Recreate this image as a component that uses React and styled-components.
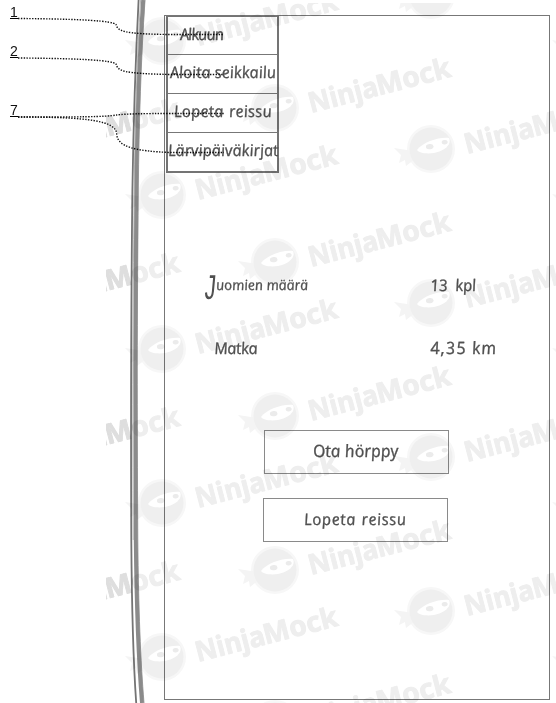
import React from "react";
import styled, { createGlobalStyle } from "styled-components";

const Global = createGlobalStyle`
  * { box-sizing: border-box; }
  html, body { margin: 0; padding: 0; background: #fff; overflow: hidden; }
`;

const Page = styled.main`
  position: relative;
  display: flex;
  width: 556px;
  height: 703px;
  overflow: hidden;
  background: #fff;
  color: #505050;
`;

const Margin = styled.aside`
  display: flex;
  flex-direction: column;
  width: 164px;
  padding-left: 10px;
  flex: none;
`;

const Marker = styled.span`
  display: block;
  width: 8px;
  height: 15px;
  margin-top: ${(p) => p.$gap}px;
  border-bottom: 1px solid #000;
  font: 14px/16px "Liberation Sans", Arial, sans-serif;
  color: #111;
`;

const Screen = styled.section`
  display: flex;
  flex-direction: column;
  width: 386px;
  height: 685px;
  margin-top: 15px;
  border: 1px solid #777;
  flex: none;
`;

const Menu = styled.nav`
  display: flex;
  flex-direction: column;
  width: 113px;
  height: 157px;
  margin-left: 1px;
  border: 2px solid #747474;
  border-top-width: 1px;
  flex: none;
`;

const MenuItem = styled.div`
  display: flex;
  flex: none;
  height: ${(p) => p.$h || 39}px;
  padding-left: ${(p) => p.$indent}px;
  border-bottom: 1px solid #777;
  &:last-child { border-bottom: 0; }
`;

const Hand = styled.span`
  display: inline-block;
  font-family: "Open Sans", "Noto Sans", sans-serif;
  font-style: italic;
  font-weight: 500;
  font-size: ${(p) => p.$size || 16}px;
  line-height: ${(p) => p.$line || 38}px;
  letter-spacing: ${(p) => p.$track || 0}px;
  word-spacing: ${(p) => p.$word || 0}px;
  -webkit-text-stroke: 0.3px currentColor;
  white-space: pre;
  transform: skewX(9deg);
`;

const Initial = styled.span`
  display: inline-block;
  width: 11px;
  margin-left: -4px;
  margin-right: 3px;
  font-family: "Liberation Mono", monospace;
  font-style: normal;
  font-size: 36px;
  line-height: 20px;
  font-weight: 400;
  letter-spacing: 0;
  vertical-align: -9px;
  transform: skewX(-14deg) scaleX(0.62);
  transform-origin: 0 60%;
  -webkit-text-stroke: 0;
`;

const Stats = styled.dl`
  display: grid;
  grid-template-columns: 224px 1fr;
  grid-template-rows: 63px 63px;
  margin: 93px 0 0 41px;
`;

const Term = styled.dt`
  margin: 0;
  padding-left: ${(p) => p.$indent || 0}px;
`;

const Value = styled.dd`
  margin: 0;
`;

const Actions = styled.div`
  display: flex;
  flex-direction: column;
  gap: 24px;
  margin: 38px 0 0 98px;
`;

const Button = styled.button`
  display: flex;
  width: 185px;
  height: 44px;
  margin: 0 0 0 ${(p) => p.$shift || 0}px;
  padding: 1px 0 0 ${(p) => p.$indent}px;
  border: 1px solid #8a8a8a;
  background: transparent;
  color: inherit;
`;

const Overlay = styled.svg`
  position: absolute;
  inset: 0;
  pointer-events: none;
  mix-blend-mode: multiply;
`;

const columns = [
  { x: 162, y: 41 },
  { x: 275, y: -46 },
  { x: 431, y: -5 },
  { x: 589, y: 41 },
];
const repeat = (list) =>
  list.flatMap(({ x, y }) => [0, 1, 2, 3, 4, 5].map((i) => ({ x, y: y + i * 154 })));
const marks = repeat(columns);
const edgeMarks = repeat([{ x: 4, y: -5 }]);

function Watermark() {
  return (
    <Overlay width="556" height="703" viewBox="0 0 556 703">
      <defs>
        <clipPath id="sheet"><rect x="106" y="3" width="450" height="700" /></clipPath>
        <clipPath id="outer"><rect x="106" y="3" width="27" height="700" /></clipPath>
        <g id="ninja">
          <circle r="24" fill="#f7f7f7" />
          <path d="M-18 2 L-37 -1 L-30 6 L-32 14 L-26 11 L-25 17 L-16 10Z" fill="#f4f4f4" />
          <circle r="21.5" fill="#efefef" />
          <path d="M-14 1 C-8 -7 8 -12 18 -11 C21 -4 13 2 3 4 C-5 5 -12 4 -14 1Z" fill="#fff" />
          <ellipse cx="-1" cy="-2.5" rx="3.8" ry="2.6" fill="#ebebeb" transform="rotate(-8)" />
          <ellipse cx="14.5" cy="-4.8" rx="3" ry="2.2" fill="#ebebeb" transform="rotate(-8)" />
          <g
            transform="translate(36 5) rotate(-14.5)"
            fontFamily="'Noto Sans', 'Open Sans', sans-serif"
            fontWeight="700"
            fontSize="28"
            fill="#eeeeee"
            stroke="#eeeeee"
            strokeWidth="0.9"
            strokeLinejoin="round"
          >
            <text textLength="71" lengthAdjust="spacingAndGlyphs">Ninja</text>
            <text x="70" textLength="76" lengthAdjust="spacingAndGlyphs">Mock</text>
          </g>
        </g>
      </defs>
      <g clipPath="url(#sheet)">
        {[...edgeMarks, ...marks].map((m) => (
          <use key={`${m.x}-${m.y}`} href="#ninja" x={m.x} y={m.y} />
        ))}
      </g>
    </Overlay>
  );
}

function WatermarkEdge() {
  return (
    <Overlay width="556" height="703" viewBox="0 0 556 703">
      <g clipPath="url(#outer)">
        {edgeMarks.map((m) => (
          <use key={m.y} href="#ninja" x={m.x} y={m.y} />
        ))}
      </g>
    </Overlay>
  );
}

function PhoneEdge() {
  return (
    <Overlay width="556" height="703" viewBox="0 0 556 703" fill="none">
      <path d="M143.2 0 C139 60 137 120 136.3 190 C135 330 135 400 135.8 540 C136.5 610 138.5 660 142 703" stroke="#8b8b8b" strokeWidth="4" />
      <path d="M145 0 C141 60 139 120 138.3 190 C137 330 137 400 137.8 540 C138.5 610 140.5 660 144 703" stroke="#8c8c8c" strokeWidth="0.8" />
      <path d="M138.6 0 C135.5 60 133.5 120 132.4 190 C130.8 330 130.7 400 131.3 540 C131.8 610 133.2 660 136.2 703" stroke="#747474" strokeWidth="1.8" />
      <path d="M140.6 0 C137 60 135 120 134.2 190 C132.6 330 132.6 400 133.2 540" stroke="#a4a4a4" strokeWidth="0.8" />
    </Overlay>
  );
}

function Connectors() {
  return (
    <Overlay
      width="556" height="703" viewBox="0 0 556 703"
      fill="none" stroke="#111" strokeWidth="1.4" strokeDasharray="1.4 1.4"
    >
      <path d="M18 18.5 C85 19 112 21 116 24.5 C118 31 122 34 170 34.5 H224" />
      <path d="M18 58 C85 58.5 112 60.5 116 64 C118 71 122 73.5 170 74.5 H224" />
      <path d="M18 117 C80 117 105 117 116.7 115 C125 113.8 145 113.5 170 113.5 H224" />
      <path d="M18 117 C90 117 116 121 116.7 134 S135 151 170 152.5 H224" />
    </Overlay>
  );
}

export default function App() {
  return (
    <Page>
      <Global />
      <Margin>
        <Marker $gap={4}>1</Marker>
        <Marker $gap={24}>2</Marker>
        <Marker $gap={44}>7</Marker>
      </Margin>
      <Screen>
        <Menu>
          <MenuItem $h={38} $indent={12}><Hand $line={34} $track={-0.9}>Alkuun</Hand></MenuItem>
          <MenuItem $indent={2}><Hand $line={34} $track={0.05}>Aloita seikkailu</Hand></MenuItem>
          <MenuItem $indent={6}><Hand $line={35} $track={0.25} $word={1}>Lopeta reissu</Hand></MenuItem>
          <MenuItem $h={38} $indent={0}><Hand $line={35} $track={0.05}>Lärvipäiväkirjat</Hand></MenuItem>
        </Menu>
        <Stats>
          <Term><Hand $size={14}><Initial>J</Initial>uomien määrä</Hand></Term>
          <Value><Hand $track={-0.2}>13  kpl</Hand></Value>
          <Term $indent={8}><Hand $track={-0.3}>Matka</Hand></Term>
          <Value><Hand $size={17} $track={1}>4,35 km</Hand></Value>
        </Stats>
        <Actions>
          <Button $shift={1} $indent={48}><Hand $size={17}>Ota hörppy</Hand></Button>
          <Button $indent={40}><Hand $track={0.6} $word={1}>Lopeta reissu</Hand></Button>
        </Actions>
      </Screen>
      <PhoneEdge />
      <Watermark />
      <WatermarkEdge />
      <Connectors />
    </Page>
  );
}
